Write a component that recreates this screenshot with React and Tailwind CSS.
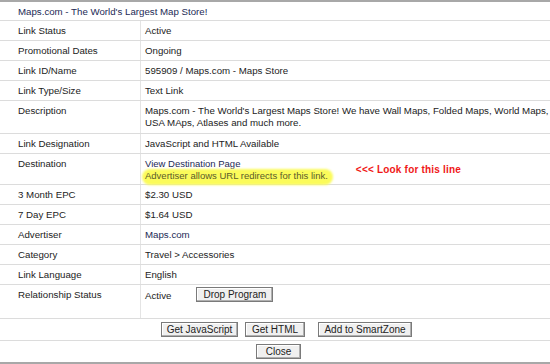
import React from "react";

const rows = [
  { label: "Link Status", value: "Active" },
  { label: "Promotional Dates", value: "Ongoing" },
  { label: "Link ID/Name", value: "595909 / Maps.com - Maps Store" },
  { label: "Link Type/Size", value: "Text Link" },
];

const rows2 = [
  { label: "3 Month EPC", value: "$2.30 USD" },
  { label: "7 Day EPC", value: "$1.64 USD" },
  { label: "Advertiser", value: "Maps.com", link: true },
  { label: "Category", value: "Travel > Accessories" },
  { label: "Link Language", value: "English" },
];

function Btn({ children, className = "" }) {
  return (
    <button
      className={
        "h-[15px] shrink-0 whitespace-nowrap border border-[#7a7a7a] bg-[#f0f0f0] px-0 text-[10px] leading-[13px] text-[#222] shadow-[inset_-1px_-1px_0_#b0b0b0,inset_1px_1px_0_#fff] " +
        className
      }
    >
      {children}
    </button>
  );
}

function Row({ label, children, className = "h-[20px]" }) {
  return (
    <div className={"flex border-b border-[#dcdcdc] " + className}>
      <div className="w-[141px] shrink-0 border-r border-[#e4e4e4] pl-[18px] pt-[4px]">{label}</div>
      <div className="min-w-0 flex-1 pl-[4px] pt-[4px]">{children}</div>
    </div>
  );
}

export default function App() {
  return (
    <div
      className="h-[364px] w-[550px] overflow-hidden bg-white text-[9.7px] leading-[12px] text-[#222]"
      style={{ fontFamily: '"Liberation Sans", Arial, sans-serif' }}
    >
      <div className="h-[2px] bg-[#a8a8a8]" />
      <div className="h-[19px] border-b border-[#dcdcdc] pl-[18px] pt-[4px] text-[#1c2a55]">
        Maps.com - The World's Largest Map Store!
      </div>
      {rows.map((r) => (
        <Row key={r.label} label={r.label}>
          {r.value}
        </Row>
      ))}
      <Row label="Description" className="h-[33px]">
        <div className="whitespace-nowrap">
          <div>Maps.com - The World's Largest Maps Store! We have Wall Maps, Folded Maps, World Maps,</div>
          <div>USA MAps, Atlases and much more.</div>
        </div>
      </Row>
      <Row label="Link Designation">JavaScript and HTML Available</Row>
      <Row label="Destination" className="h-[31px]">
        <div className="flex items-start whitespace-nowrap text-[9.5px]">
          <div>
            <div className="text-[#1c2a55]">View Destination Page</div>
            <div className="relative inline-block">
              <span className="absolute -left-[3px] -right-[5px] -top-[1px] -bottom-[3px] rounded-[8px] bg-[#fbfb5a] blur-[1px]" />
              <span className="relative text-[#5a5a2a]">Advertiser allows URL redirects for this link.</span>
            </div>
          </div>
          <div className="ml-[28px] mt-[6px] text-[10px] font-bold tracking-[0.2px] text-[#f01818]">
            &lt;&lt;&lt; Look for this line
          </div>
        </div>
      </Row>
      {rows2.map((r) => (
        <Row key={r.label} label={r.label}>
          <span className={r.link ? "text-[#1c2a55]" : ""}>{r.value}</span>
        </Row>
      ))}
      <Row label="Relationship Status" className="h-[34px]">
        <div className="flex items-start">
          <span className="pt-[1px]">Active</span>
          <Btn className="ml-[25px] -mt-[2px] w-[77px]">Drop Program</Btn>
        </div>
      </Row>
      <div className="flex h-[22px] items-center border-b border-[#dcdcdc] pl-[161px]">
        <Btn className="w-[77px]">Get JavaScript</Btn>
        <Btn className="ml-[7px] w-[60px]">Get HTML</Btn>
        <Btn className="ml-[13px] w-[94px]">Add to SmartZone</Btn>
      </div>
      <div className="flex h-[21px] items-center pl-[256px]">
        <Btn className="w-[45px]">Close</Btn>
      </div>
      <div className="h-[3px] bg-[#a8a8a8]" />
    </div>
  );
}
